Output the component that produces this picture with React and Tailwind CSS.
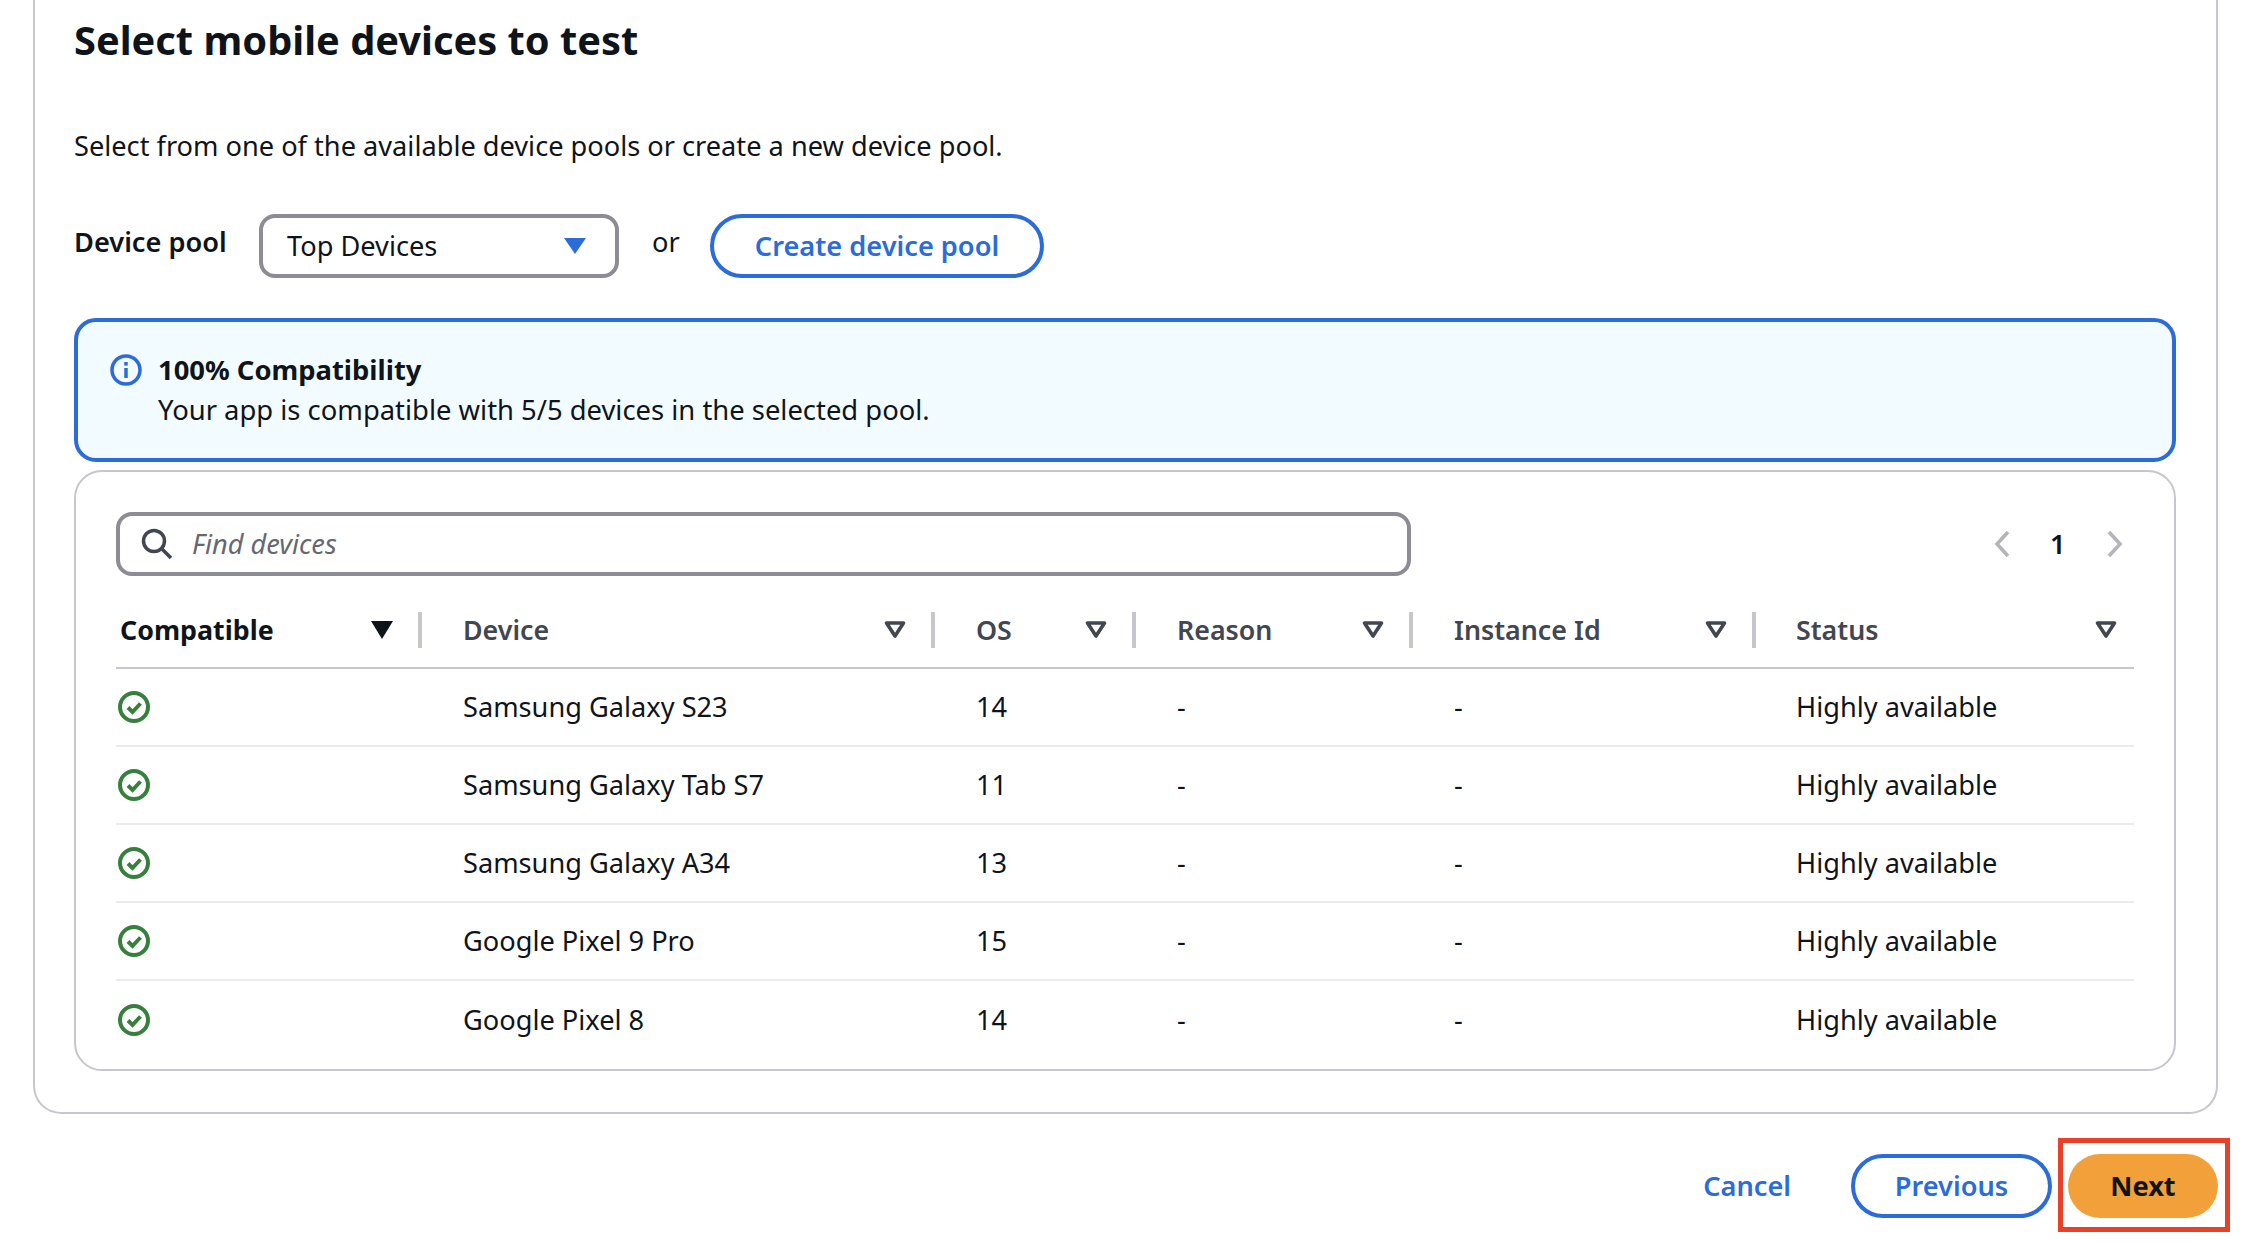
import React from "react";

const devices = [
  { name: "Samsung Galaxy S23", os: "14" },
  { name: "Samsung Galaxy Tab S7", os: "11" },
  { name: "Samsung Galaxy A34", os: "13" },
  { name: "Google Pixel 9 Pro", os: "15" },
  { name: "Google Pixel 8", os: "14" },
];

const columns = ["Compatible", "Device", "OS", "Reason", "Instance Id", "Status"];
const gridCols = "grid grid-cols-[306px_513px_201px_277px_343px_378px]";

const headerPadding = [
  "pl-1 pr-[24px]",
  "pl-[41px] pr-[24px]",
  "pl-[41px] pr-[24px]",
  "pl-[41px] pr-[24px]",
  "pl-[41px] pr-[24px]",
  "pl-[40px] pr-[16px]",
];

const SortIcon = ({ active }) => (
  <svg width="24" height="20" viewBox="0 0 24 20" className="shrink-0">
    {active ? (
      <path d="M1 1h22L12 19z" fill="#0f141a" />
    ) : (
      <path d="M3.5 3h17L12 16z" fill="none" stroke="#424650" strokeWidth="3.6" strokeLinejoin="round" />
    )}
  </svg>
);

const CheckIcon = () => (
  <svg width="32" height="32" viewBox="0 0 32 32">
    <circle cx="16" cy="16" r="14" fill="none" stroke="#377f3c" strokeWidth="4" />
    <path d="M10 16.5l4.5 4.5 8-8.5" fill="none" stroke="#377f3c" strokeWidth="4" />
  </svg>
);

const App = () => {
  return (
    <div className="w-[2246px] h-[1242px] overflow-hidden bg-white text-[#0f141a] font-['Noto_Sans',sans-serif] text-[27.2px] leading-[40px]">
      <div className="ml-[33px] w-[2185px] h-[1114px] border-2 border-t-0 border-[#c6c6cd] rounded-b-[28px] pl-[39px] pr-[40px] pt-4">
        <h1 className="text-[39.8px] leading-[48px] font-bold">Select mobile devices to test</h1>
        <p className="mt-[62px]">Select from one of the available device pools or create a new device pool.</p>

        <div className="mt-[48px] flex items-center h-16">
          <span className="w-[185px] mb-[8px] font-semibold">Device pool</span>
          <div className="w-[360px] h-16 flex items-center justify-between border-4 border-[#8c8c94] rounded-2xl pl-6 pr-[29px]">
            <span>Top Devices</span>
            <svg width="22" height="16" viewBox="0 0 22 16">
              <path d="M0 0h22L11 16z" fill="#2b6cd9" />
            </svg>
          </div>
          <span className="ml-[33px] w-[58px] mb-[8px]">or</span>
          <button className="w-[334px] h-16 border-4 border-[#2b6cd9] rounded-full text-[#2b6cd9] font-semibold">
            Create device pool
          </button>
        </div>

        <div className="mt-10 h-36 border-4 border-[#2b6cd9] bg-[#f2fbff] rounded-[22px] pl-[32px] pt-[28px] flex gap-[16px]">
          <svg width="32" height="32" viewBox="0 0 32 32" className="mt-[4px] shrink-0">
            <circle cx="16" cy="16" r="14" fill="none" stroke="#2b6cd9" strokeWidth="3.5" />
            <path d="M16 14v10" stroke="#2b6cd9" strokeWidth="3.5" />
            <path d="M16 8v3.6" stroke="#2b6cd9" strokeWidth="3.5" />
          </svg>
          <div className="text-[27.4px]">
            <div className="font-bold">100% Compatibility</div>
            <div>Your app is compatible with 5/5 devices in the selected pool.</div>
          </div>
        </div>

        <div className="mt-2 h-[601px] border-2 border-[#c6c6cd] rounded-[28px] pl-[40px] pr-[40px] pt-[40px]">
          <div className="flex items-center justify-between">
            <div className="w-[1295px] h-16 flex items-center border-4 border-[#8c8c94] rounded-2xl pl-[21px]">
              <svg width="32" height="32" viewBox="0 0 32 32" className="shrink-0">
                <circle cx="13" cy="13" r="10.5" fill="none" stroke="#424650" strokeWidth="3.5" />
                <path d="M21 21l9 9" stroke="#424650" strokeWidth="3.5" />
              </svg>
              <input
                placeholder="Find devices"
                className="ml-[19px] flex-1 outline-none italic placeholder:text-[#656871]"
              />
            </div>
            <div className="flex items-center pr-[10px]">
              <svg width="18" height="28" viewBox="0 0 18 28">
                <path d="M15 2L4 14l11 12" fill="none" stroke="#b4b4bb" strokeWidth="3.6" />
              </svg>
              <span className="ml-[39px] w-[56px] font-semibold">1</span>
              <svg width="18" height="28" viewBox="0 0 18 28">
                <path d="M3 2l11 12L3 26" fill="none" stroke="#b4b4bb" strokeWidth="3.6" />
              </svg>
            </div>
          </div>

          <div className={`${gridCols} mt-[36px] h-[56.5px] border-b-2 border-[#c6c6cd] items-start`}>
            {columns.map((col, index) => (
              <div
                key={col}
                className={`flex items-center justify-between h-9 ${headerPadding[index]} ${
                  index === columns.length - 1 ? "" : "border-r-4 border-[#c6c6cd]"
                }`}
              >
                <span className={`text-[26.8px] ${index === 0 ? "font-bold" : "font-semibold text-[#424650]"}`}>{col}</span>
                <SortIcon active={index === 0} />
              </div>
            ))}
          </div>

          {devices.map((device, index) => (
            <div
              key={device.name}
              className={`${gridCols} h-[78.2px] items-center ${index < devices.length - 1 ? "border-b-2 border-[#e9ebed]" : ""}`}
            >
              <div className="pl-[2px] flex">
                <CheckIcon />
              </div>
              <div className="pl-[41px]">{device.name}</div>
              <div className="pl-[41px]">{device.os}</div>
              <div className="pl-[41px]">-</div>
              <div className="pl-[41px]">-</div>
              <div className="pl-[40px]">Highly available</div>
            </div>
          ))}
        </div>
      </div>

      <div className="mt-[40px] flex items-center justify-end pr-[28px]">
        <button className="text-[#2b6cd9] font-semibold mr-[60px]">Cancel</button>
        <button className="w-[201px] h-16 border-4 border-[#2b6cd9] rounded-full text-[#2b6cd9] font-semibold">
          Previous
        </button>
        <div className="relative ml-[16px]">
          <button className="block w-[150px] h-16 bg-[#f2a03a] rounded-full font-bold">Next</button>
          <span className="absolute -left-[10px] -top-[16px] w-[172px] h-[94px] border-[5px] border-[#e8412a]" />
        </div>
      </div>
    </div>
  );
};

export default App;
